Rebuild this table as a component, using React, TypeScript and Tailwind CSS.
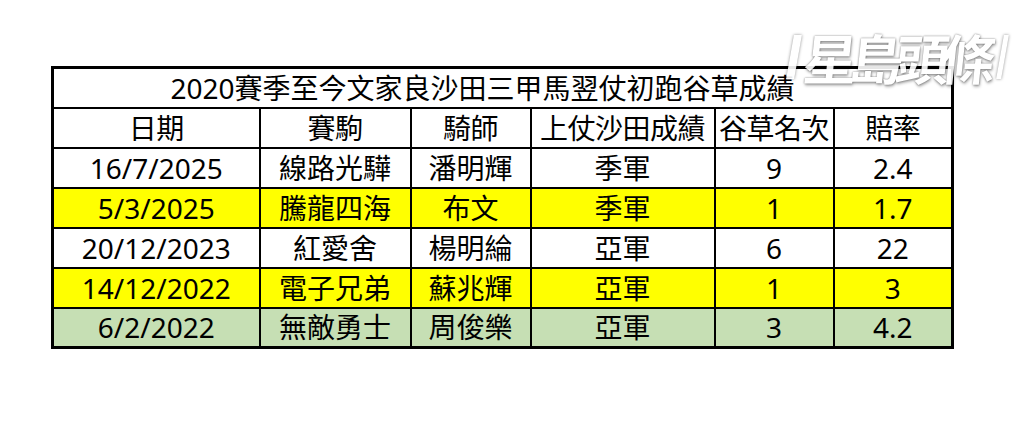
import * as React from "react";

const rows = [
  { date: "16/7/2025", horse: "線路光驊", jockey: "潘明輝", st: "季軍", place: "9", odds: "2.4", bg: "bg-white" },
  { date: "5/3/2025", horse: "騰龍四海", jockey: "布文", st: "季軍", place: "1", odds: "1.7", bg: "bg-[#ffff00]" },
  { date: "20/12/2023", horse: "紅愛舍", jockey: "楊明綸", st: "亞軍", place: "6", odds: "22", bg: "bg-white" },
  { date: "14/12/2022", horse: "電子兄弟", jockey: "蘇兆輝", st: "亞軍", place: "1", odds: "3", bg: "bg-[#ffff00]" },
  { date: "6/2/2022", horse: "無敵勇士", jockey: "周俊樂", st: "亞軍", place: "3", odds: "4.2", bg: "bg-[#c6dfb4]" },
];

const headers = ["日期", "賽駒", "騎師", "上仗沙田成績", "谷草名次", "賠率"];
const widths = [207, 151, 120, 184, 119, 119];

// faded "星島頭條" logo watermark in the corner
function Watermark() {
  return (
    <div className="absolute left-[790px] top-[30px] flex items-center gap-[6px] opacity-90 select-none">
      <div className="h-[44px] w-[8px] -skew-x-[10deg] bg-white shadow-[0_0_3px_rgba(0,0,0,0.5)]" />
      <span
        className="-skew-x-[6deg] text-[54px] font-bold leading-none tracking-[-8px] text-white [text-shadow:0_0_2px_rgba(0,0,0,0.6),1px_2px_3px_rgba(0,0,0,0.35)]"
        style={{ fontFamily: '"Noto Sans CJK TC", sans-serif' }}
      >
        星島頭條
      </span>
      <div className="ml-[6px] h-[44px] w-[5px] -skew-x-[10deg] bg-white shadow-[0_0_3px_rgba(0,0,0,0.5)]" />
    </div>
  );
}

export default function App() {
  return (
    <div
      className="relative h-[431px] w-[1024px] overflow-hidden bg-white pl-[51px] pt-[66px] text-black"
      style={{ fontFamily: '"Noto Sans", "Noto Sans CJK TC", sans-serif' }}
    >
      <table className="border-collapse border-[3px] border-black text-[28px] leading-none">
        <colgroup>
          {widths.map((w, i) => (
            <col key={i} style={{ width: w }} />
          ))}
        </colgroup>
        <tbody>
          <tr className="h-[40px]">
            <td colSpan={6} className="border-2 border-black pr-[40px] text-center">
              2020賽季至今文家良沙田三甲馬翌仗初跑谷草成績
            </td>
          </tr>
          <tr className="h-[40px]">
            {headers.map((h) => (
              <td key={h} className="border-2 border-black p-0 text-center tracking-[-0.5px]">
                {h}
              </td>
            ))}
          </tr>
          {rows.map((r) => (
            <tr key={r.date} className={`h-[40px] ${r.bg}`}>
              {[r.date, r.horse, r.jockey, r.st, r.place, r.odds].map((c, i) => (
                <td key={i} className="border-2 border-black p-0 text-center">
                  {c}
                </td>
              ))}
            </tr>
          ))}
        </tbody>
      </table>
      <Watermark />
    </div>
  );
}
